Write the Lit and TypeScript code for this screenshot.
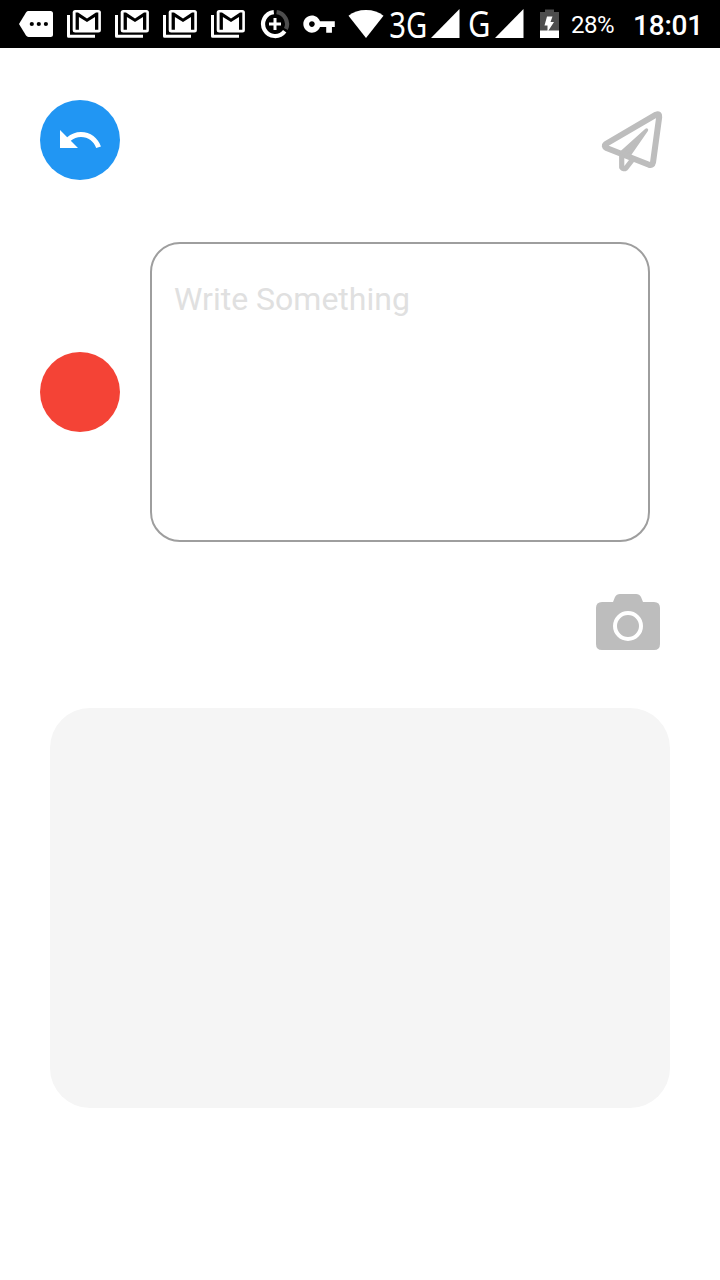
import { LitElement, html, css, svg } from "lit";
import { customElement } from "lit/decorators.js";

@customElement("status-bar")
class StatusBar extends LitElement {
  static styles = css`
    :host {
      display: flex;
      height: 48px;
      padding-left: 12px;
      background: #000;
      color: #fff;
      font-family: Roboto, sans-serif;
      white-space: nowrap;
      box-sizing: border-box;
    }
    svg { display: block; flex: none; overflow: visible; }
    span { flex: none; line-height: 50px; }
    .net text { font-family: "Noto Sans", sans-serif; font-size: 37px; fill: #fff; }
    .battery { font-size: 24px; width: 62px; letter-spacing: -0.5px; }
    .clock { font-size: 28px; font-weight: 500; line-height: 52px; letter-spacing: -0.2px; }
  `;

  private mail() {
    return html`<svg width="48" height="48" viewBox="0 0 48 48">
      <path d="M8.5 15v21.3H35" fill="none" stroke="#fff" stroke-width="3" stroke-linejoin="round" />
      <rect x="12.7" y="10" width="28.2" height="22.5" rx="2.5" fill="#fff" />
      <path d="M15.6 12.6H18L27 18.4L36 12.6H38.3V29.8H35V17L27 22L18.9 17V29.8H15.6Z" fill="#000" />
    </svg>`;
  }

  private signal() {
    return svg`<path d="M1 38L29.5 9V38Z" fill="#fff" />`;
  }

  render() {
    return html`
      <svg width="48" height="48" viewBox="12 0 48 48">
        <path d="M28.5 11H50.5Q53 11 53 13.5V34.5Q53 37 50.5 37H28.5Q27 37 26 35.6L19 24L26 12.4Q27 11 28.5 11Z" fill="#fff" />
        <circle cx="31.8" cy="24" r="2.1" /><circle cx="38.8" cy="24" r="2.1" /><circle cx="45.9" cy="24" r="2.1" />
      </svg>
      ${this.mail()}${this.mail()}${this.mail()}${this.mail()}
      <svg width="48" height="48" viewBox="252 0 48 48">
        <g fill="none" stroke-width="4.2">
          <path d="M273.8 12.1A12 12 0 1 0 284.7 31.2" stroke="#fff" />
          <path d="M276.6 12.1A12 12 0 0 1 285.9 29" stroke="#4d4d4d" />
          <path d="M275 18V30M269 24H281" stroke="#fff" stroke-width="3" />
        </g>
      </svg>
      <svg width="42" height="48" viewBox="300 0 42 48">
        <path transform="translate(301.9 6.9) scale(1.43)" fill="#fff" d="M12.65 10C11.83 7.67 9.61 6 7 6c-3.31 0-6 2.69-6 6s2.69 6 6 6c2.61 0 4.83-1.67 5.65-4H17v4h4v-4h2v-4H12.65zM7 14c-1.1 0-2-.9-2-2s.9-2 2-2 2 .9 2 2-.9 2-2 2z" />
      </svg>
      <svg width="48" height="48" viewBox="342 0 48 48">
        <path d="M366 38L348.5 15.8C353 12 359 10 366 10S379 12 383.5 15.8Z" fill="#fff" />
      </svg>
      <svg class="net" width="40" height="48"><text x="-0.8" y="38" textLength="38" lengthAdjust="spacingAndGlyphs">3G</text></svg>
      <svg width="38" height="48">${this.signal()}</svg>
      <svg class="net" width="26" height="48"><text x="0" y="37" textLength="22.5" lengthAdjust="spacingAndGlyphs">G</text></svg>
      <svg width="42" height="48">${this.signal()}</svg>
      <svg width="35" height="48" viewBox="536 0 35 48">
        <path d="M540 12H545V9.5H554V12H559V31H540Z" fill="#4d4d4d" />
        <path d="M540 30.5H559V38H540Z" fill="#fff" />
        <path d="M547 16.5H552.5L550.5 22H554L547.5 32V25.5H544.5Z" fill="#fff" />
      </svg>
      <span class="battery">28%</span>
      <span class="clock">18:01</span>
    `;
  }
}

@customElement("app-root")
class AppRoot extends LitElement {
  static styles = css`
    :host {
      display: block;
      height: 1280px;
      background: #fff;
      font-family: Roboto, sans-serif;
    }
    svg { display: block; }
    .toolbar {
      display: flex;
      justify-content: space-between;
      align-items: center;
      height: 80px;
      padding: 52px 50px 0 40px;
    }
    .round {
      display: grid;
      place-items: center;
      flex: none;
      width: 80px;
      height: 80px;
      padding: 0;
      border: 0;
      border-radius: 50%;
      background: #2196f3;
    }
    .red { background: #f44336; }
    .plain { padding: 0; border: 0; background: none; }
    .compose {
      display: flex;
      align-items: center;
      gap: 30px;
      margin: 62px 0 0 40px;
    }
    .note {
      box-sizing: border-box;
      width: 500px;
      height: 300px;
      padding: 36px 22px;
      border: 2px solid #9e9e9e;
      border-radius: 30px;
      color: #e0e0e0;
      font-size: 32px;
      line-height: 38px;
    }
    .attach {
      display: flex;
      justify-content: flex-end;
      padding: 44px 52px 0 0;
    }
    .preview {
      height: 400px;
      margin: 42px 50px 0;
      border-radius: 40px;
      background: #f5f5f5;
    }
  `;

  render() {
    return html`
      <status-bar></status-bar>
      <div class="toolbar">
        <button class="round" aria-label="Undo">
          <svg width="48" height="48" viewBox="0 0 24 24">
            <path fill="#fff" d="M12.5 8c-2.65 0-5.05.99-6.9 2.6L2 7v9h9l-3.62-3.62c1.39-1.16 3.16-1.88 5.12-1.88 3.54 0 6.55 2.31 7.6 5.5l2.37-.78C21.08 11.03 17.15 8 12.5 8z" />
          </svg>
        </button>
        <button class="plain" aria-label="Send">
          <svg width="80" height="80" viewBox="590 100 80 80" fill="none" stroke="#bdbdbd" stroke-width="6" stroke-linejoin="round" stroke-linecap="round">
            <path d="M605.8 144L656 114.7Q659.6 113.2 659.2 117L653 162.5Q652.3 165.8 649 164.8L606.5 148Q603.4 146 605.8 144Z" />
            <path d="M621.7 154V167.3Q623.3 169.8 626 168L633 159" stroke-width="5.2" />
            <path d="M646.5 130L629 155.3L621.5 152.5Z" fill="#bdbdbd" stroke-width="3.4" />
          </svg>
        </button>
      </div>
      <div class="compose">
        <button class="round red" aria-label="Colour"></button>
        <div class="note">Write Something</div>
      </div>
      <div class="attach">
        <svg width="80" height="80" viewBox="588 586 80 80">
          <path fill="#bdbdbd" d="M602 602H613L615 597Q616.5 594 620 594H636Q639.5 594 641 597L643 602H654Q660 602 660 608V644Q660 650 654 650H602Q596 650 596 644V608Q596 602 602 602Z" />
          <circle cx="628" cy="626" r="13" fill="none" stroke="#fff" stroke-width="4" />
        </svg>
      </div>
      <div class="preview"></div>
    `;
  }
}
